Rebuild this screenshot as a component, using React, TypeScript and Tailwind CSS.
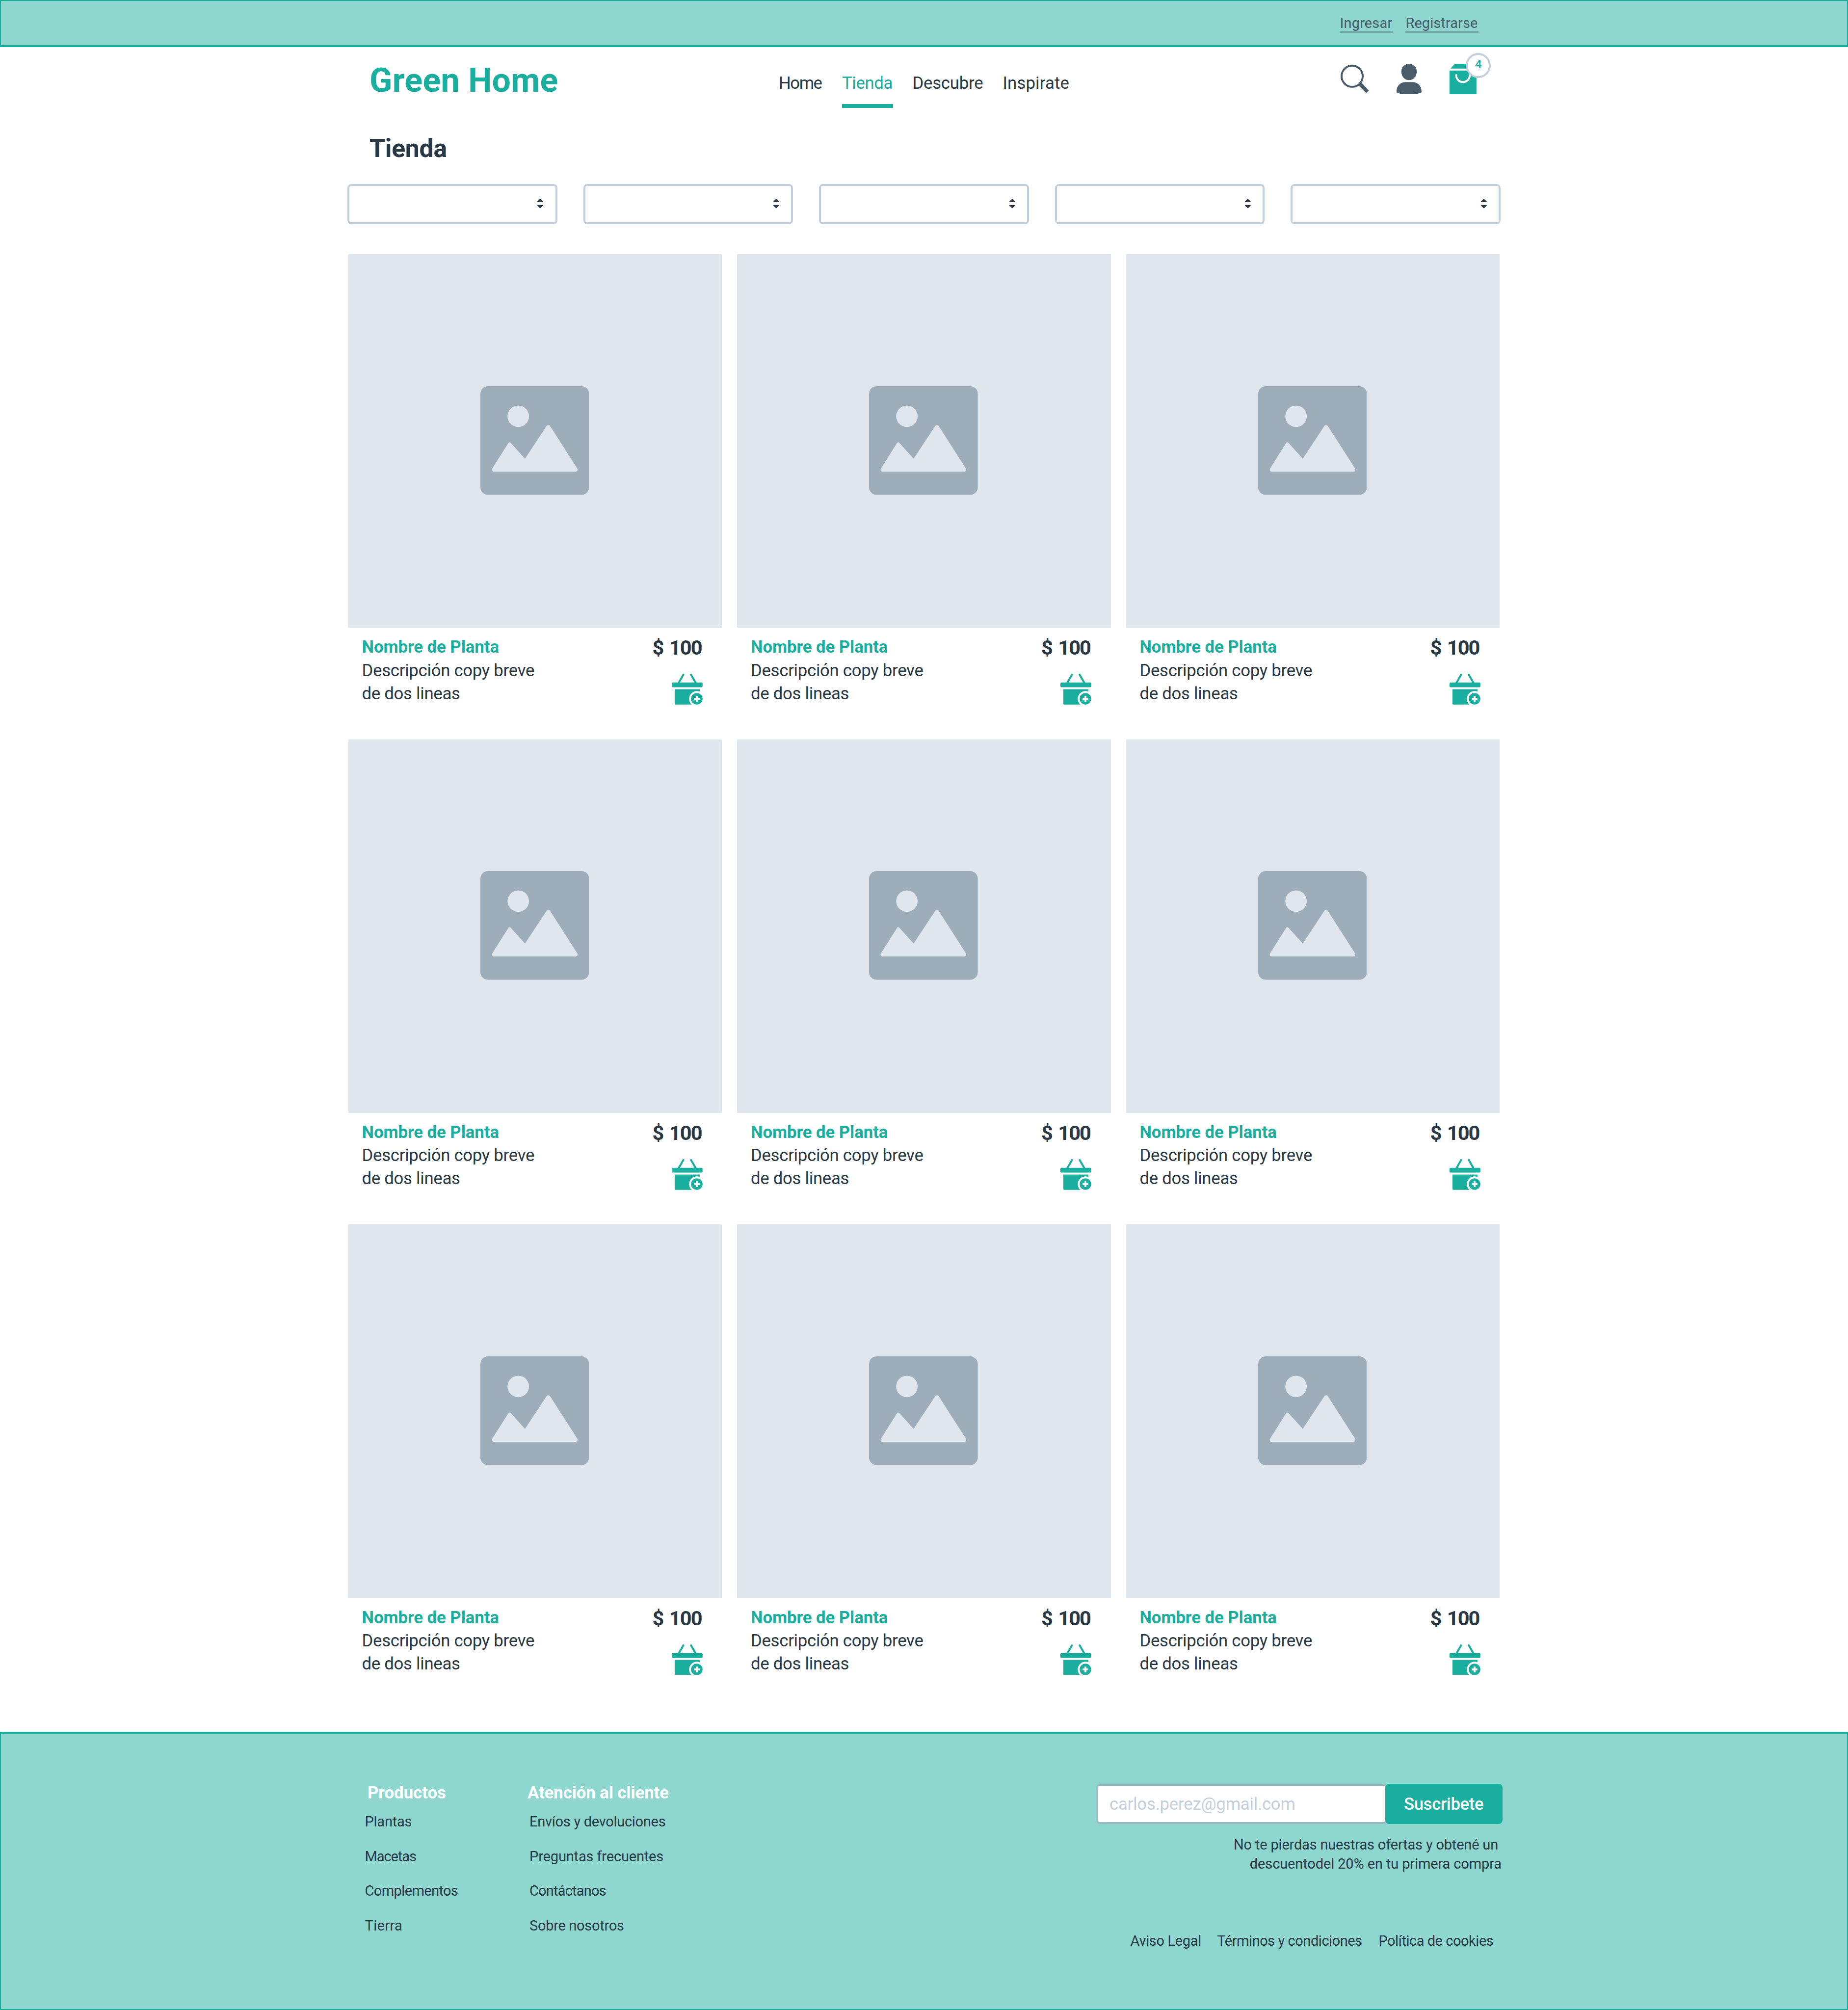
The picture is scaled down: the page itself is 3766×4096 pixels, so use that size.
const topLinks = [
  { label: "Ingresar", cls: "w-[108px] tracking-[0.15px]" },
  { label: "Registrarse", cls: "w-[149px] tracking-[0.06px]" },
];

const navItems = [
  { label: "Home", cls: "w-[91px] tracking-[-1.45px] border-transparent" },
  { label: "Tienda", cls: "w-[104px] tracking-[-0.35px] border-[#1aae9f] text-[#1aae9f]" },
  { label: "Descubre", cls: "ml-[1.5px] w-[146px] tracking-[-0.23px] border-transparent" },
  { label: "Inspirate", cls: "tracking-[0.15px] border-transparent" },
];

const productLinks = [
  { label: "Plantas", cls: "tracking-[-0.24px]" },
  { label: "Macetas", cls: "tracking-[-1.07px]" },
  { label: "Complementos", cls: "tracking-[-0.6px]" },
  { label: "Tierra", cls: "tracking-[0.34px]" },
];

const supportLinks = [
  { label: "Envíos y devoluciones", cls: "tracking-[-0.29px]" },
  { label: "Preguntas frecuentes", cls: "tracking-[-0.16px]" },
  { label: "Contáctanos", cls: "tracking-[-0.8px]" },
  { label: "Sobre nosotros", cls: "tracking-[-0.3px]" },
];

const legalLinks = [
  { label: "Aviso Legal", cls: "w-[176.8px] tracking-[-0.35px]" },
  { label: "Términos y condiciones", cls: "w-[329px] tracking-[-0.46px]" },
  { label: "Política de cookies", cls: "tracking-[-0.47px]" },
];

function SearchIcon() {
  return (
    <svg viewBox="0 0 64 64" className="size-[62.77px] text-[#4b5c6b]">
      <circle cx="26" cy="25.8" r="22" fill="none" stroke="currentColor" strokeWidth="4" />
      <path d="M45.3 39 60.7 55.7 55.3 60.7 40 45.7Z" fill="currentColor" />
    </svg>
  );
}

function UserIcon() {
  return (
    <svg viewBox="0 0 64 64" className="size-[62.77px] text-[#4b5c6b]" fill="currentColor">
      <path d="M32 0c9 0 16 7 16 16 0 10-7 18-16 18s-16-8-16-18C16 7 23 0 32 0Z" />
      <path d="M24 38h16c10 0 18 8.5 18 19.5v2C52 62.5 42 64 32 64S12 62.5 6 59.500v-2C6 46.500 14 38 24 38Z" />
    </svg>
  );
}

function BagIcon() {
  return (
    <svg viewBox="0 0 64 64" className="size-[62.77px] text-[#1aae9f]" fill="currentColor">
      <path d="M15.3 0H48.7L58.3 10H5.7Z" />
      <path d="M4 14h56v48a2 2 0 0 1-2 2H6a2 2 0 0 1-2-2Z" />
      <path d="M18 22v2a14 14 0 0 0 28 0v-2" fill="none" stroke="#fff" strokeWidth="4" />
    </svg>
  );
}

function AddToBasketIcon() {
  return (
    <svg viewBox="0 0 64 64" className="size-[62.77px] text-[#1aae9f]" fill="currentColor">
      <path
        d="M24 2 14.7 18M40 2 49.3 18"
        fill="none"
        stroke="currentColor"
        strokeWidth="4"
        strokeLinecap="round"
      />
      <rect y="18" width="64" height="10" rx="2" />
      <path d="M6 32h52v32H8a2 2 0 0 1-2-2Z" />
      <circle cx="52" cy="52" r="16" fill="#fff" />
      <circle cx="52" cy="52" r="12" />
      <path d="M50 46h4v4h4v4h-4v4h-4v-4h-4v-4h4Z" fill="#fff" />
    </svg>
  );
}

function PlaceholderIcon() {
  return (
    <svg viewBox="0 0 226 226" className="mr-[2px] mb-[2px] size-[221.6px]">
      <rect width="226" height="226" rx="16" fill="#9eadba" />
      <circle cx="78.7" cy="62.5" r="22.3" fill="#dfe6ed" />
      <path
        d="M28.7 177.7C24.5 177.7 22.8 174 24.9 170.8L57.7 118.7C59.2 116.3 61.8 116.2 63.9 118.8L92.7 150.7L137.3 83C139.3 80 143 80 145 83L201.2 170.8C203.3 174 201.5 177.7 197.3 177.7Z"
        fill="#dfe6ed"
      />
    </svg>
  );
}

function Select() {
  return (
    <div className="flex h-[82.4px] items-center justify-end rounded-[8px] border-4 border-[#c3cfd9] bg-white pr-[24.5px]">
      <svg viewBox="0 0 12 20" className="mb-[2px] h-[19.6px] w-[11.8px]" fill="#293845">
        <path d="M6 0 12 5.7V7H0V5.7ZM0 13h12v1.3L6 20 0 14.3Z" />
      </svg>
    </div>
  );
}

function ProductCard() {
  return (
    <article className="h-[988.7px]">
      <div className="flex h-[761.1px] items-center justify-center bg-[#dfe6ed]">
        <PlaceholderIcon />
      </div>
      <div className="flex text-[34.7px] leading-[47.1px]">
        <div className="w-[619.5px] pt-[16.5px] pl-[27.5px]">
          <h3 className="font-bold tracking-[-0.04px] text-[#1aae9f]">Nombre de Planta</h3>
          <p className="tracking-[-0.26px]">
            Descripción copy breve
            <br />
            de dos lineas
          </p>
        </div>
        <div className="pt-[16.5px]">
          <p className="text-[41.5px] leading-[50px] font-bold tracking-[-1.9px] [word-spacing:4px]">$ 100</p>
          <div className="pt-[27.7px] pl-[39.5px]">
            <AddToBasketIcon />
          </div>
        </div>
      </div>
    </article>
  );
}

export default function App() {
  return (
    <div className="h-[4096px] w-[3766px] overflow-hidden bg-white font-['Roboto',sans-serif] whitespace-nowrap text-[#293845]">
      <div className="flex h-[96px] justify-end gap-[26px] border-2 border-b-4 border-[#1aae9f] bg-[#8dd7cf] pt-[29px] pr-[751px] text-[29px] leading-[32px] text-[#4b5c6b]">
        {topLinks.map((link) => (
          <a key={link.label} className={`h-[36px] border-b-4 border-[#77abad] pl-[0.5px] ${link.cls}`}>
            {link.label}
          </a>
        ))}
      </div>

      <header className="flex h-[124px] items-start pl-[753px]">
        <div className="w-[834px] pt-[27.5px] text-[68px] leading-[80px] font-bold tracking-[0.35px] text-[#1aae9f]">
          Green Home
        </div>
        <nav className="flex w-[1143.4px] gap-[38px] pt-[49px] text-[34.7px] leading-[48px]">
          {navItems.map((item) => (
            <a key={item.label} className={`h-[75px] border-b-8 ${item.cls}`}>
              {item.label}
            </a>
          ))}
        </nav>
        <div className="flex gap-[47px] pt-[33.5px]">
          <SearchIcon />
          <UserIcon />
          <div className="relative">
            <BagIcon />
            <span className="absolute top-[-21.6px] left-[37.3px] size-[51px] rounded-full border-4 border-[#c3cfd9] bg-white text-center text-[24.5px] leading-[38px] font-medium text-[#1aae9f]">
              4
            </span>
          </div>
        </div>
      </header>

      <main className="pl-[708px]">
        <h2 className="pt-[51px] pl-[45px] text-[51.7px] leading-[64px] font-bold tracking-[-0.25px]">Tienda</h2>
        <div className="mt-[39.7px] grid w-[2350px] grid-cols-5 gap-[53px]">
          {[0, 1, 2, 3, 4].map((i) => (
            <Select key={i} />
          ))}
        </div>
        <div className="mt-[60.8px] ml-[2px] grid w-[2346px] grid-cols-3 gap-x-[31.4px]">
          {[0, 1, 2, 3, 4, 5, 6, 7, 8].map((i) => (
            <ProductCard key={i} />
          ))}
        </div>
      </main>

      <footer className="mt-[45px] flex h-[567px] border-2 border-t-4 border-[#1aae9f] bg-[#8dd7cf] pl-[741.5px] text-[29px]">
        <section className="w-[331.5px] pt-[97px]">
          <h4 className="pl-[5.5px] text-[34.7px] leading-[47px] font-bold text-white">Productos</h4>
          <ul className="leading-[70.6px]">
            {productLinks.map((link) => (
              <li key={link.label} className={link.cls}>
                {link.label}
              </li>
            ))}
          </ul>
        </section>
        <section className="w-[1159px] pt-[97px]">
          <h4 className="text-[34.7px] leading-[47px] font-bold tracking-[-0.07px] text-white">Atención al cliente</h4>
          <ul className="pl-[4px] leading-[70.6px]">
            {supportLinks.map((link) => (
              <li key={link.label} className={link.cls}>
                {link.label}
              </li>
            ))}
          </ul>
        </section>
        <section className="w-[828px] pt-[102px]">
          <div className="flex h-[82.4px] text-[34.7px]">
            <div className="mr-[-4px] flex w-[592.5px] items-center rounded-[8px] border-4 border-[#97bbc1] bg-white pl-[23px] tracking-[-0.21px] text-[#c3cfd9]">
              carlos.perez@gmail.com
            </div>
            <button className="z-10 w-[239.3px] rounded-[8px] bg-[#1aae9f] font-medium tracking-[-0.32px] text-white">
              Suscribete
            </button>
          </div>
          <p className="pt-[22.5px] text-right leading-[39.2px]">
            <span className="block pr-[9px] tracking-[-0.19px]">No te pierdas nuestras ofertas y obtené un</span>
            <span className="block pr-[2px] tracking-[-0.13px]">descuentodel 20% en tu primera compra</span>
          </p>
          <div className="flex pt-[117px] pl-[69.6px] leading-[40px]">
            {legalLinks.map((link) => (
              <a key={link.label} className={link.cls}>
                {link.label}
              </a>
            ))}
          </div>
        </section>
      </footer>
    </div>
  );
}
